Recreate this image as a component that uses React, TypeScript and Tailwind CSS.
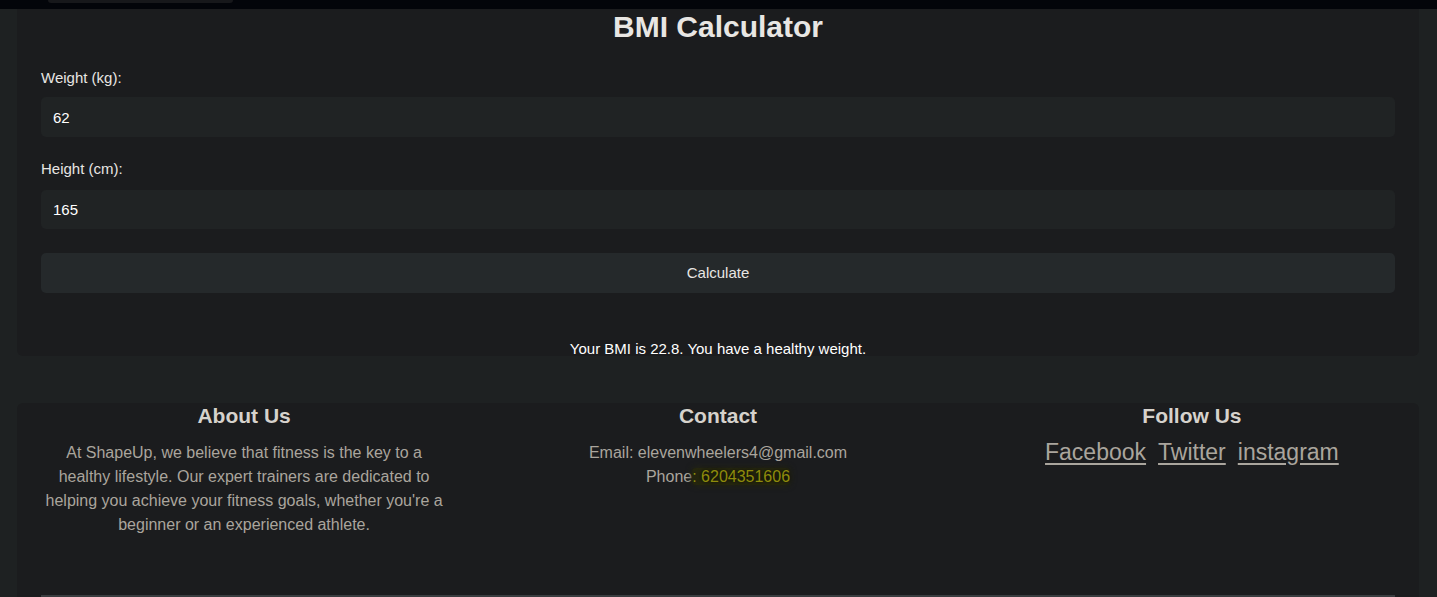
export default function App() {
  return (
    <div className="h-[597px] bg-[#1e2122] font-['Liberation_Sans',Arial,sans-serif] overflow-hidden">
      <div className="h-[9px] bg-[#03050a] pl-[48px]">
        <div className="w-[185px] h-[3px] rounded-b-[4px] bg-[#17181b]" />
      </div>

      <div className="pl-[17px] pr-[18px]">
        <div className="h-[347px] rounded-b-[6px] bg-[#1b1c1e] px-6">
          <h1 className="text-center text-[30px] leading-[36px] font-bold text-[#e8e6e3]">
            BMI Calculator
          </h1>

          <label className="block mt-[24px] mb-[10px] text-[15px] leading-[18px] text-[#e8e6e3]">
            Weight (kg):
          </label>
          <input
            type="text"
            defaultValue="62"
            className="block w-full h-10 px-3 rounded-[5px] bg-[#202324] text-[15px] text-white focus:outline-none"
          />

          <label className="block mt-[23px] mb-[12px] text-[15px] leading-[18px] text-[#e8e6e3]">
            Height (cm):
          </label>
          <input
            type="text"
            defaultValue="165"
            className="block w-full h-[39px] px-3 rounded-[5px] bg-[#202324] text-[15px] text-white focus:outline-none"
          />

          <button className="block w-full h-10 mt-6 rounded-[5px] bg-[#25292b] text-[15px] text-[#e8e6e3]">
            Calculate
          </button>

          <p className="mt-[47px] text-center text-[15px] leading-[18px] text-white">
            Your BMI is 22.8. You have a healthy weight.
          </p>
        </div>
      </div>

      <div className="pl-[17px] pr-[18px] mt-[47px]">
        <footer className="rounded-t-[6px] bg-[#1b1c1e] px-6 pb-6">
          <div className="flex justify-between h-[192px]">
            <div className="w-[30%] text-center">
              <h3 className="text-[21px] leading-[26px] font-bold text-[#d6d2cc]">About Us</h3>
              <p className="mt-3 text-[16px] leading-6 text-[#aaa59d]">
                At ShapeUp, we believe that fitness is the key to a healthy lifestyle. Our expert
                trainers are dedicated to helping you achieve your fitness goals, whether you're a
                beginner or an experienced athlete.
              </p>
            </div>

            <div className="w-[30%] text-center">
              <h3 className="text-[21px] leading-[26px] font-bold text-[#d6d2cc]">Contact</h3>
              <p className="mt-3 text-[16px] leading-6 text-[#aaa59d]">
                Email: elevenwheelers4@gmail.com
              </p>
              <p className="text-[16px] leading-6 text-[#aaa59d]">
                Phone
                <span className="bg-[#26270f] text-[#8f8c0c] [text-shadow:0_0_4px_#000] rounded-[4px] shadow-[0_0_6px_#26270f]">
                  : 6204351606
                </span>
              </p>
            </div>

            <div className="w-[30%] text-center">
              <h3 className="text-[21px] leading-[26px] font-bold text-[#d6d2cc]">Follow Us</h3>
              <div className="mt-[11px] flex justify-center gap-3 text-[23px] leading-6 text-[#aaa59d]">
                <a href="#" className="underline underline-offset-[3px]">Facebook</a>
                <a href="#" className="underline underline-offset-[3px]">Twitter</a>
                <a href="#" className="underline underline-offset-[3px]">instagram</a>
              </div>
            </div>
          </div>
          <div className="h-6 border-t-2 border-[#3a3d40]" />
        </footer>
      </div>
    </div>
  );
}
